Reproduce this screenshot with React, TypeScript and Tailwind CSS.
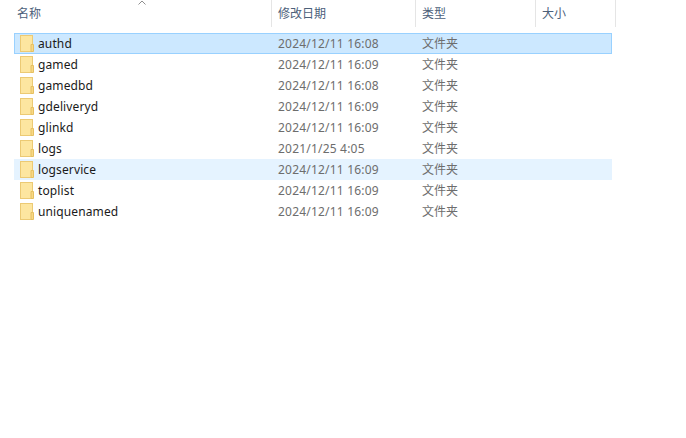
const rows = [
  ["authd", "2024/12/11 16:08", "selected"],
  ["gamed", "2024/12/11 16:09", ""],
  ["gamedbd", "2024/12/11 16:08", ""],
  ["gdeliveryd", "2024/12/11 16:09", ""],
  ["glinkd", "2024/12/11 16:09", ""],
  ["logs", "2021/1/25 4:05", ""],
  ["logservice", "2024/12/11 16:09", "hover"],
  ["toplist", "2024/12/11 16:09", ""],
  ["uniquenamed", "2024/12/11 16:09", ""],
];

function Folder() {
  return (
    <svg width="14" height="17" viewBox="0 0 14 17" className="shrink-0">
      <rect x="0.5" y="0.5" width="12" height="16" fill="#fde6a0" stroke="#ecca74" />
      <rect x="1" y="1" width="11" height="15" fill="#fde6a0" />
      <path d="M11 9.5h2.5v7H11z" fill="#f8d884" stroke="#e6c062" />
    </svg>
  );
}

function Head({ w, label }: { w: string; label: string }) {
  return (
    <div className={`${w} h-[27px] border-r border-[#e5e5e5] flex items-center pl-[6px] text-[12px] text-[#4c607a]`}>
      {label}
    </div>
  );
}

export default function App() {
  return (
    <div
      className="relative w-[686px] h-[438px] bg-white overflow-hidden"
      style={{ fontFamily: '"Noto Sans", "Noto Sans CJK SC", sans-serif' }}
    >
      <svg width="10" height="5" viewBox="0 0 10 5" className="absolute left-[137px] top-0">
        <path d="M1.5 4.5 L5 1 L8.5 4.5" fill="none" stroke="#8f8f8f" />
      </svg>
      <div className="flex h-[27px]">
        <div className="w-[272px] h-[27px] border-r border-[#e5e5e5] flex items-center pl-[17px] text-[12px] text-[#4c607a]">
          名称
        </div>
        <Head w="w-[144px]" label="修改日期" />
        <Head w="w-[120px]" label="类型" />
        <Head w="w-[80px]" label="大小" />
      </div>
      <div className="flex flex-col pt-[6px] pl-[14px]">
        {rows.map(([name, date, state]) => (
          <div
            key={name}
            className={`w-[598px] h-[21px] flex items-center text-[12px] ${
              state === "selected"
                ? "bg-[#cce8ff] outline outline-1 -outline-offset-1 outline-[#99d1ff]"
                : state === "hover"
                  ? "bg-[#e5f3ff]"
                  : ""
            }`}
          >
            <div className="w-[257px] flex items-center pl-[6px] gap-[4px] text-[#1a1a1a] tracking-[0.12px]">
              <Folder />
              <span>{name}</span>
            </div>
            <div className="w-[144px] pl-[7px] text-[#6d6d6d] tracking-[0.2px]">{date}</div>
            <div className="pl-[7px] text-[#6d6d6d]">文件夹</div>
          </div>
        ))}
      </div>
    </div>
  );
}
